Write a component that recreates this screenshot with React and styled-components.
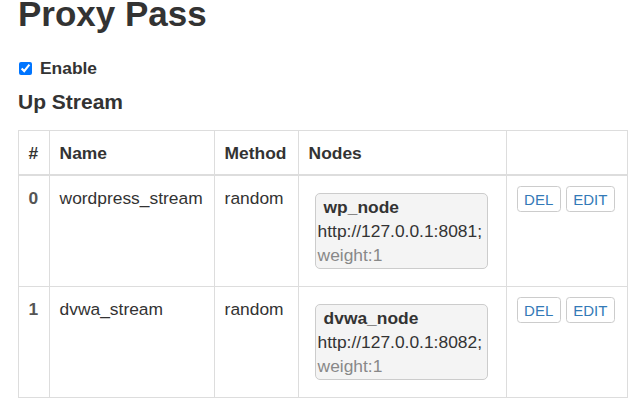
import styled, { createGlobalStyle } from "styled-components";

const GlobalStyle = createGlobalStyle`
    body {
        margin: 0;
        font-family: "Liberation Sans", Arial, sans-serif;
        font-size: 17.4px;
        line-height: 24px;
        color: #333;
        background: #fff;
    }
`

const streams = [
    { id: 0, name: "wordpress_stream", method: "random", node: "wp_node", url: "http://127.0.0.1:8081;", weight: 1 },
    { id: 1, name: "dvwa_stream", method: "random", node: "dvwa_node", url: "http://127.0.0.1:8082;", weight: 1 },
]

export default function App() {
    return (
        <>
            <GlobalStyle />
            <Page>
                <Title>Proxy Pass</Title>
                <EnableRow>
                    <input type="checkbox" defaultChecked />
                    <span>Enable</span>
                </EnableRow>
                <SubTitle>Up Stream</SubTitle>
                <Table>
                    <colgroup>
                        <col style={{ width: 31 }} />
                        <col style={{ width: 165 }} />
                        <col style={{ width: 84 }} />
                        <col style={{ width: 208 }} />
                        <col style={{ width: 121 }} />
                    </colgroup>
                    <thead>
                        <tr>
                            <th>#</th>
                            <th>Name</th>
                            <th>Method</th>
                            <th>Nodes</th>
                            <th></th>
                        </tr>
                    </thead>
                    <tbody>
                        {streams.map((s) => (
                            <tr key={s.id}>
                                <IndexCell>{s.id}</IndexCell>
                                <td>{s.name}</td>
                                <td>{s.method}</td>
                                <td>
                                    <NodeBox>
                                        <NodeName>{s.node}</NodeName>
                                        <div>{s.url}</div>
                                        <Weight>weight:{s.weight}</Weight>
                                    </NodeBox>
                                </td>
                                <td>
                                    <Actions>
                                        <Button>DEL</Button>
                                        <Button>EDIT</Button>
                                    </Actions>
                                </td>
                            </tr>
                        ))}
                    </tbody>
                </Table>
            </Page>
        </>
    )
}

const Page = styled.div`
    padding: 0 18px;
`

const Title = styled.h1`
    font-size: 35px;
    line-height: 38.5px;
    font-weight: 700;
    margin: -5px 0 0 0;
`

const EnableRow = styled.label`
    display: flex;
    align-items: center;
    margin-top: 22.5px;
    height: 24px;
    font-weight: 700;

    input {
        width: 13px;
        height: 13px;
        margin: 1px 8px 0 1px;
        accent-color: #0075ff;
    }
`

const SubTitle = styled.h4`
    font-size: 21px;
    line-height: 23px;
    font-weight: 700;
    margin: 10px 0 17px 0;
`

const Table = styled.table`
    width: 609px;
    table-layout: fixed;
    border-collapse: collapse;
    border: 1px solid #ddd;

    th, td {
        padding: 10px 9.6px 10px;
        border: 1px solid #ddd;
        vertical-align: top;
        text-align: left;
    }

    thead th {
        border-bottom: 2px solid #ddd;
        vertical-align: bottom;
        padding-top: 9.6px;
        padding-bottom: 9.6px;
    }
`

const IndexCell = styled.td`
    font-weight: 700;
    color: #555;
`

const NodeBox = styled.div`
    display: inline-block;
    margin: 7px 6px;
    padding: 1px 5px 1px 2px;
    background: #f4f4f4;
    border: 1px solid #ccc;
    border-radius: 5px;
`

const NodeName = styled.div`
    font-weight: 700;
    padding-left: 6px;
`

const Weight = styled.div`
    color: #888;
`

const Actions = styled.div`
    display: flex;
    gap: 5px;
`

const Button = styled.button`
    font-family: "Liberation Sans", Arial, sans-serif;
    font-size: 15px;
    line-height: 21px;
    height: 26px;
    padding: 1px 6.5px;
    color: #337ab7;
    background: #fff;
    border: 1px solid #ccc;
    border-radius: 3.6px;
    cursor: pointer;
`
